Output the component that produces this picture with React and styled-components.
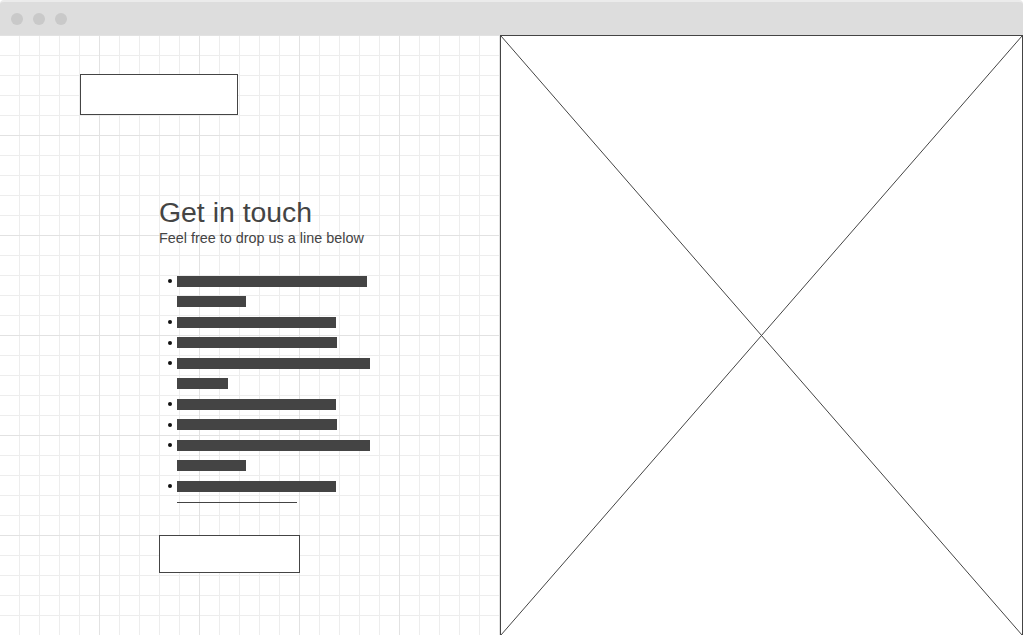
import React from 'react';
import styled, { createGlobalStyle } from 'styled-components';

const GlobalStyle = createGlobalStyle`
  html, body {
    margin: 0;
    padding: 0;
    background: #ffffff;
    font-family: 'Liberation Sans', Arial, sans-serif;
    overflow: hidden;
  }
`;

const Window = styled.div`
  width: 1023px;
  height: 635px;
  display: flex;
  flex-direction: column;
  overflow: hidden;
`;

const TitleBar = styled.div`
  height: 33px;
  border-top: 2px solid #ebebeb;
  border-radius: 4px 4px 0 0;
  background: #dddddd;
  display: flex;
  align-items: center;
  gap: 10px;
  padding-left: 11px;
  flex-shrink: 0;
`;

const Dot = styled.span`
  width: 12px;
  height: 12px;
  border-radius: 50%;
  background: #c9c9c9;
`;

const Body = styled.div`
  flex: 1;
  display: flex;
  min-height: 0;
`;

const GridPanel = styled.div`
  width: 500px;
  flex-shrink: 0;
  background-color: #ffffff;
  background-image:
    linear-gradient(to right, #e2e2e2 1px, transparent 1px),
    linear-gradient(to bottom, #e2e2e2 1px, transparent 1px),
    linear-gradient(to right, #ededed 1px, transparent 1px),
    linear-gradient(to bottom, #ededed 1px, transparent 1px);
  background-size: 100px 100px, 100px 100px, 20px 20px, 20px 20px;
  background-position: -1px 0, -1px 0, -1px 0, -1px 0;
  display: flex;
  flex-direction: column;
  padding-top: 39px;
  box-sizing: border-box;
`;

const LogoBox = styled.div`
  margin-left: 80px;
  width: 158px;
  height: 41px;
  box-sizing: border-box;
  border: 1px solid #444444;
  background: #ffffff;
`;

const Content = styled.div`
  margin-left: 159px;
  margin-top: 81px;
  color: #444444;
`;

const Heading = styled.h1`
  margin: 0;
  font-size: 28.4px;
  line-height: 32px;
  font-weight: 400;
`;

const Sub = styled.p`
  margin: 1px 0 0;
  font-size: 14.4px;
  line-height: 18px;
`;

const List = styled.ul`
  list-style: none;
  margin: 24px 0 0;
  padding: 0 0 0 9px;
`;

const Item = styled.li`
  display: flex;
  gap: 5px;
`;

const Bullet = styled.span`
  width: 4px;
  height: 4px;
  border-radius: 50%;
  background: #111111;
  margin-top: 8px;
  flex-shrink: 0;
`;

const Lines = styled.div`
  display: flex;
  flex-direction: column;
`;

const Line = styled.div`
  height: 20.5px;
  display: flex;
  align-items: center;
`;

const Bar = styled.span`
  display: block;
  height: 11px;
  width: ${(p) => p.$w}px;
  background: #444444;
`;

const Underline = styled.div`
  margin: 5px 0 0 18px;
  width: 120px;
  height: 1px;
  background: #444444;
`;

const Button = styled.div`
  margin-top: 32px;
  width: 141px;
  height: 38px;
  box-sizing: border-box;
  border: 1px solid #444444;
  background: #ffffff;
`;

const ImagePanel = styled.div`
  flex: 1;
  box-sizing: border-box;
  border: 1px solid #444444;
  border-bottom: none;
  background: #ffffff;
`;

const Cross = styled.svg`
  display: block;
  width: 100%;
  height: 100%;
`;

const ITEMS = [
  [190, 69],
  [159],
  [160],
  [193, 51],
  [159],
  [160],
  [193, 69],
  [159],
];

export default function App() {
  return (
    <>
      <GlobalStyle />
      <Window>
        <TitleBar>
          <Dot />
          <Dot />
          <Dot />
        </TitleBar>
        <Body>
          <GridPanel>
            <LogoBox />
            <Content>
              <Heading>Get in touch</Heading>
              <Sub>Feel free to drop us a line below</Sub>
              <List>
                {ITEMS.map((widths, i) => (
                  <Item key={i}>
                    <Bullet />
                    <Lines>
                      {widths.map((w, j) => (
                        <Line key={j}>
                          <Bar $w={w} />
                        </Line>
                      ))}
                    </Lines>
                  </Item>
                ))}
              </List>
              <Underline />
              <Button />
            </Content>
          </GridPanel>
          <ImagePanel>
            <Cross viewBox="0 0 100 100" preserveAspectRatio="none">
              <line x1="0" y1="0" x2="100" y2="100" stroke="#444" strokeWidth="1" vectorEffect="non-scaling-stroke" />
              <line x1="100" y1="0" x2="0" y2="100" stroke="#444" strokeWidth="1" vectorEffect="non-scaling-stroke" />
            </Cross>
          </ImagePanel>
        </Body>
      </Window>
    </>
  );
}
